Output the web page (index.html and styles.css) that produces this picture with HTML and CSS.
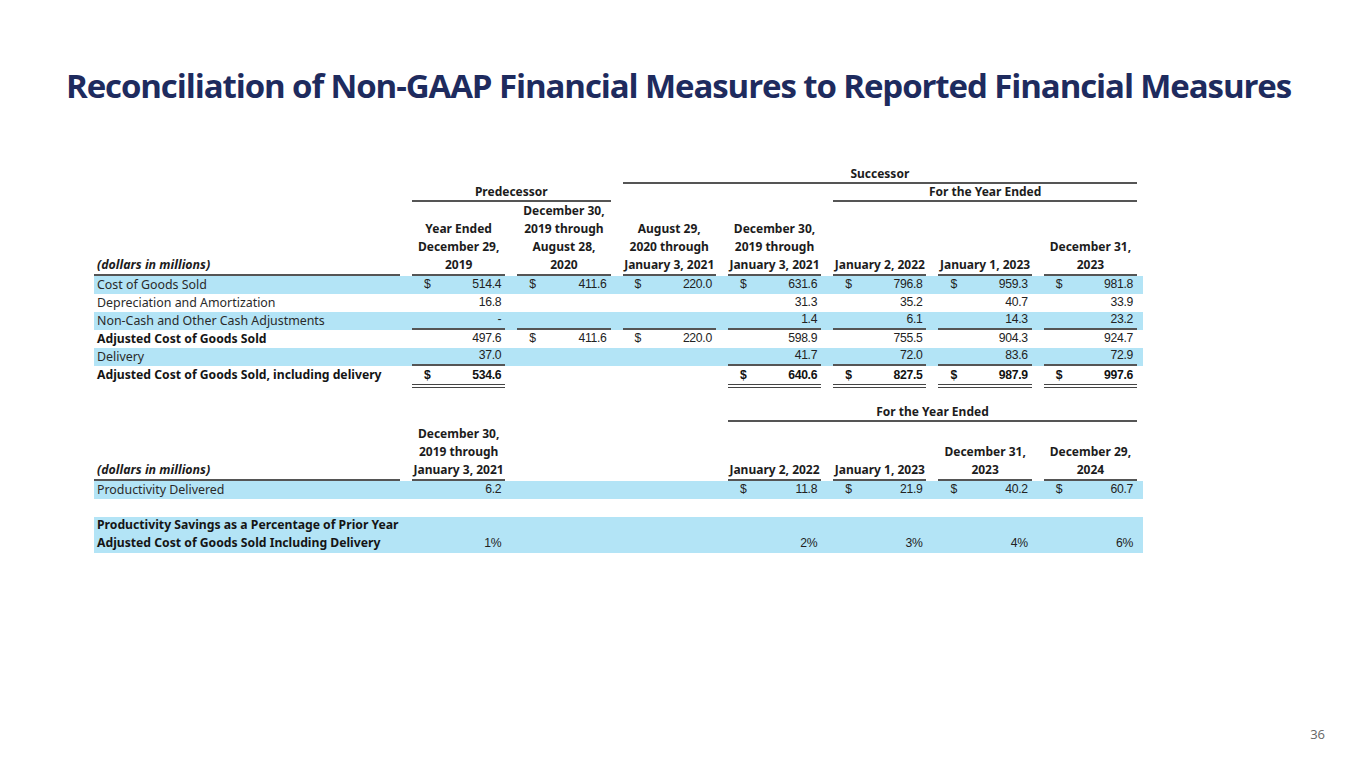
FILE: index.html
```html
<!DOCTYPE html>
<html lang="en">
<head>
<meta charset="utf-8">
<title>Reconciliation of Non-GAAP Financial Measures</title>
<link rel="stylesheet" href="styles.css">
</head>
<body>
<div class="page">
  <h1 class="title">Reconciliation of Non-GAAP Financial Measures to Reported Financial Measures</h1>

  <div class="tbl t1">
    <div class="row grp">
      <div class="c s-succ"><div class="u hd">Successor</div></div>
    </div>
    <div class="row grp">
      <div class="c s-pred"><div class="u hd">Predecessor</div></div>
      <div class="c s-fye"><div class="u hd">For the Year Ended</div></div>
    </div>
    <div class="row head">
      <div class="c lbl"><div class="u hd it">(dollars in millions)</div></div>
      <div class="c"><div class="u hd">Year Ended<br>December 29,<br>2019</div></div>
      <div class="c"><div class="u hd">December 30,<br>2019 through<br>August 28,<br>2020</div></div>
      <div class="c"><div class="u hd">August 29,<br>2020 through<br>January 3, 2021</div></div>
      <div class="c"><div class="u hd">December 30,<br>2019 through<br>January 3, 2021</div></div>
      <div class="c"><div class="u hd">January 2, 2022</div></div>
      <div class="c"><div class="u hd">January 1, 2023</div></div>
      <div class="c"><div class="u hd">December 31,<br>2023</div></div>
    </div>

    <div class="row data blue">
      <div class="c lbl"><div class="in">Cost of Goods Sold</div></div>
      <div class="c"><div class="in"><span>$</span><span class="v">514.4</span></div></div>
      <div class="c"><div class="in"><span>$</span><span class="v">411.6</span></div></div>
      <div class="c"><div class="in"><span>$</span><span class="v">220.0</span></div></div>
      <div class="c"><div class="in"><span>$</span><span class="v">631.6</span></div></div>
      <div class="c"><div class="in"><span>$</span><span class="v">796.8</span></div></div>
      <div class="c"><div class="in"><span>$</span><span class="v">959.3</span></div></div>
      <div class="c"><div class="in"><span>$</span><span class="v">981.8</span></div></div>
    </div>
    <div class="row data">
      <div class="c lbl"><div class="in">Depreciation and Amortization</div></div>
      <div class="c"><div class="in"><span class="v">16.8</span></div></div>
      <div class="c"><div class="in"></div></div>
      <div class="c"><div class="in"></div></div>
      <div class="c"><div class="in"><span class="v">31.3</span></div></div>
      <div class="c"><div class="in"><span class="v">35.2</span></div></div>
      <div class="c"><div class="in"><span class="v">40.7</span></div></div>
      <div class="c"><div class="in"><span class="v">33.9</span></div></div>
    </div>
    <div class="row data blue">
      <div class="c lbl"><div class="in">Non-Cash and Other Cash Adjustments</div></div>
      <div class="c"><div class="in ul"><span class="v">-</span></div></div>
      <div class="c"><div class="in ul"></div></div>
      <div class="c"><div class="in ul"></div></div>
      <div class="c"><div class="in ul"><span class="v">1.4</span></div></div>
      <div class="c"><div class="in ul"><span class="v">6.1</span></div></div>
      <div class="c"><div class="in ul"><span class="v">14.3</span></div></div>
      <div class="c"><div class="in ul"><span class="v">23.2</span></div></div>
    </div>
    <div class="row data">
      <div class="c lbl"><div class="in b">Adjusted Cost of Goods Sold</div></div>
      <div class="c"><div class="in"><span class="v">497.6</span></div></div>
      <div class="c"><div class="in"><span>$</span><span class="v">411.6</span></div></div>
      <div class="c"><div class="in"><span>$</span><span class="v">220.0</span></div></div>
      <div class="c"><div class="in"><span class="v">598.9</span></div></div>
      <div class="c"><div class="in"><span class="v">755.5</span></div></div>
      <div class="c"><div class="in"><span class="v">904.3</span></div></div>
      <div class="c"><div class="in"><span class="v">924.7</span></div></div>
    </div>
    <div class="row data blue">
      <div class="c lbl"><div class="in">Delivery</div></div>
      <div class="c"><div class="in ul"><span class="v">37.0</span></div></div>
      <div class="c"><div class="in"></div></div>
      <div class="c"><div class="in"></div></div>
      <div class="c"><div class="in ul"><span class="v">41.7</span></div></div>
      <div class="c"><div class="in ul"><span class="v">72.0</span></div></div>
      <div class="c"><div class="in ul"><span class="v">83.6</span></div></div>
      <div class="c"><div class="in ul"><span class="v">72.9</span></div></div>
    </div>
    <div class="row data">
      <div class="c lbl"><div class="in b">Adjusted Cost of Goods Sold, including delivery</div></div>
      <div class="c"><div class="in dbl nb"><span>$</span><span class="v">534.6</span></div></div>
      <div class="c"><div class="in"></div></div>
      <div class="c"><div class="in"></div></div>
      <div class="c"><div class="in dbl nb"><span>$</span><span class="v">640.6</span></div></div>
      <div class="c"><div class="in dbl nb"><span>$</span><span class="v">827.5</span></div></div>
      <div class="c"><div class="in dbl nb"><span>$</span><span class="v">987.9</span></div></div>
      <div class="c"><div class="in dbl nb"><span>$</span><span class="v">997.6</span></div></div>
    </div>
  </div>

  <div class="tbl t2">
    <div class="row grp">
      <div class="c s-fye2"><div class="u hd">For the Year Ended</div></div>
    </div>
    <div class="row head head2">
      <div class="c lbl"><div class="u hd it">(dollars in millions)</div></div>
      <div class="c"><div class="u hd">December 30,<br>2019 through<br>January 3, 2021</div></div>
      <div class="c"></div>
      <div class="c"></div>
      <div class="c"><div class="u hd">January 2, 2022</div></div>
      <div class="c"><div class="u hd">January 1, 2023</div></div>
      <div class="c"><div class="u hd">December 31,<br>2023</div></div>
      <div class="c"><div class="u hd">December 29,<br>2024</div></div>
    </div>
    <div class="row data blue">
      <div class="c lbl"><div class="in">Productivity Delivered</div></div>
      <div class="c"><div class="in"><span class="v">6.2</span></div></div>
      <div class="c"><div class="in"></div></div>
      <div class="c"><div class="in"></div></div>
      <div class="c"><div class="in"><span>$</span><span class="v">11.8</span></div></div>
      <div class="c"><div class="in"><span>$</span><span class="v">21.9</span></div></div>
      <div class="c"><div class="in"><span>$</span><span class="v">40.2</span></div></div>
      <div class="c"><div class="in"><span>$</span><span class="v">60.7</span></div></div>
    </div>
    <div class="row spacer"></div>
    <div class="row blue tall">
      <div class="c lbl"><div class="in b two">Productivity Savings as a Percentage of Prior Year<br>Adjusted Cost of Goods Sold Including Delivery</div></div>
      <div class="c"><div class="in"><span class="v">1%</span></div></div>
      <div class="c"></div>
      <div class="c"></div>
      <div class="c"><div class="in"><span class="v">2%</span></div></div>
      <div class="c"><div class="in"><span class="v">3%</span></div></div>
      <div class="c"><div class="in"><span class="v">4%</span></div></div>
      <div class="c"><div class="in"><span class="v">6%</span></div></div>
    </div>
  </div>

  <div class="foot">36</div>
</div>
</body>
</html>
```

FILE: styles.css
```css
* { box-sizing: border-box; }
html, body { margin: 0; padding: 0; background: #ffffff; }
body { font-family: "Noto Sans", sans-serif; color: #222; }

.page {
  width: 1365px;
  height: 768px;
  display: flex;
  flex-direction: column;
  padding: 66px 0 0 66px;
  overflow: hidden;
}

.title {
  margin: 0;
  font-family: "Open Sans", "Noto Sans", sans-serif;
  font-weight: 700;
  font-size: 33px;
  line-height: 40px;
  letter-spacing: -1.1px;
  color: #1e2b5e;
  white-space: nowrap;
}

.tbl {
  margin-left: 28px;
  width: 1049px;
  display: flex;
  flex-direction: column;
}
.t1 { margin-top: 60px; }
.t2 { margin-top: 16px; }

.row {
  display: grid;
  grid-template-columns: 312px repeat(7, 105.3px);
  min-height: 18px;
}
.row.blue { background: #b3e4f6; }
.row.tall { min-height: 36px; }

.c {
  padding: 0 6px;
  display: flex;
  flex-direction: column;
  justify-content: flex-end;
  min-width: 0;
}
.row.data .c { justify-content: flex-start; }
.c.lbl { padding: 0 6px 0 0; }

.s-succ { grid-column: 4 / 9; }
.s-pred { grid-column: 2 / 4; }
.s-fye { grid-column: 6 / 9; }
.s-fye2 { grid-column: 5 / 9; }

.u {
  border-bottom: 2px solid #555;
}
.hd {
  font-family: "Noto Sans", sans-serif;
  font-weight: 700;
  font-size: 12px;
  line-height: 18px;
  text-align: center;
  color: #1c1c1c;
  white-space: nowrap;
}
.grp .hd { line-height: 16px; }
.lbl .hd { text-align: left; padding-left: 3px; }
.it { font-style: italic; font-size: 12.4px; }
.head2 { padding-top: 3px; }

.in {
  height: 18px;
  display: flex;
  align-items: flex-end;
  padding: 0 4px 0 12px;
  font-family: "Liberation Sans", "Arial", sans-serif;
  font-size: 12.2px;
  letter-spacing: -0.3px;
  line-height: 17px;
  color: #222;
  border-bottom: 1px solid transparent;
  white-space: nowrap;
}
.in .v { margin-left: auto; }
.in.ul { border-bottom: 2px solid #555; }
.in.dbl { height: 22px; border-bottom: 4px double #444; }
.in.nb { font-weight: 700; color: #111; }
.lbl .in {
  padding: 0 0 0 3px;
  font-family: "Noto Sans", sans-serif;
  font-size: 12.4px;
  letter-spacing: 0;
  color: #2a2a2a;
}
.lbl .in.b { font-weight: 700; font-size: 12.2px; color: #151515; }
.lbl .in.two { height: 36px; line-height: 18px; }

.foot {
  margin-top: auto;
  align-self: flex-end;
  margin-right: 40px;
  margin-bottom: 25px;
  font-family: "Open Sans", sans-serif;
  font-size: 13px;
  color: #666;
}
```
